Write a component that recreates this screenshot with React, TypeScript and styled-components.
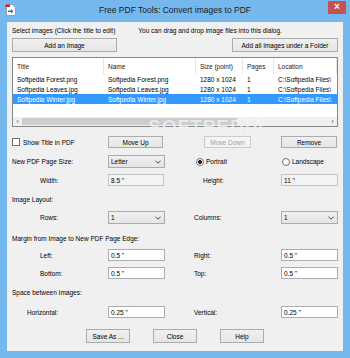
import React from "react";
import styled, { createGlobalStyle } from "styled-components";

const GlobalStyle = createGlobalStyle`
  html, body {
    margin: 0;
    padding: 0;
    background: #fff;
  }
  body {
    font-family: "Liberation Sans", Arial, sans-serif;
    font-size: 6.5px;
    color: #000;
  }
`;

const files = [
  { title: "Softpedia Forest.png", name: "Softpedia Forest.png", selected: false },
  { title: "Softpedia Leaves.jpg", name: "Softpedia Leaves.jpg", selected: false },
  { title: "Softpedia Winter.jpg", name: "Softpedia Winter.jpg", selected: true },
];

const columns = [
  { label: "Title", width: 91 },
  { label: "Name", width: 92 },
  { label: "Size (point)", width: 47 },
  { label: "Pages", width: 31 },
  { label: "Location", width: 63 },
];

function Chevron() {
  return (
    <svg width="6" height="4" viewBox="0 0 6 4">
      <path d="M0.5 0.8 L3 3.2 L5.5 0.8" fill="none" stroke="#444" strokeWidth="1" />
    </svg>
  );
}

function Combo({ value, $w }: { value: string; $w: number }) {
  return (
    <ComboBox $w={$w}>
      <span>{value}</span>
      <Chevron />
    </ComboBox>
  );
}

function AppIcon() {
  return (
    <svg width="11" height="12" viewBox="0 0 11 12">
      <path d="M1.5 0.5 H7.5 L10.5 3.5 V11.5 H1.5 Z" fill="#fff" stroke="#8aa0b8" />
      <path d="M0.5 0.5 H5 V3 H0.5 Z" fill="#e02020" />
      <path d="M3 6.5 H6 V5 L8.5 7.3 L6 9.6 V8.1 H3 Z" fill="#2f6fd6" />
    </svg>
  );
}

export default function App() {
  return (
    <>
      <GlobalStyle />
      <Window>
        <TitleBar>
          <IconSlot>
            <AppIcon />
          </IconSlot>
          <Title>Free PDF Tools: Convert images to PDF</Title>
          <CloseSlot>
            <CloseButton>×</CloseButton>
          </CloseSlot>
        </TitleBar>

        <Client>
          <Watermark>SOFTPEDIA</Watermark>

          <NoteRow>
            <span>Select images (Click the title to edit)</span>
            <span>You can drag and drop image files into this dialog.</span>
          </NoteRow>

          <TopButtons>
            <Button $w={105} $h={14}>Add an Image</Button>
            <Button $w={106} $h={14}>Add all Images under a Folder</Button>
          </TopButtons>

          <ListView>
            <HeaderRow>
              {columns.map((c) => (
                <HeaderCell key={c.label} $w={c.width}>
                  {c.label}
                </HeaderCell>
              ))}
            </HeaderRow>
            {files.map((f) => (
              <ItemRow key={f.title} $selected={f.selected}>
                <Cell $w={91}>{f.title}</Cell>
                <Cell $w={92}>{f.name}</Cell>
                <Cell $w={47}>1280 x 1024</Cell>
                <Cell $w={31}>1</Cell>
                <Cell $w={63}>C:\Softpedia Files\</Cell>
              </ItemRow>
            ))}
            <ListFill />
            <HScroll>
              <ScrollArrow>‹</ScrollArrow>
              <ScrollThumb />
              <ScrollTrack />
              <ScrollArrow>›</ScrollArrow>
            </HScroll>
          </ListView>

          <FormRow $mt={9} $h={12}>
            <CheckLabel>
              <CheckBox />
              Show Title in PDF
            </CheckLabel>
            <Button $w={55} $h={12}>Move Up</Button>
            <span />
            <Button $w={47} $h={12} $disabled $ml={10}>Move Down</Button>
            <Button $w={56} $h={12}>Remove</Button>
          </FormRow>

          <FormRow $mt={7} $h={13}>
            <Label>New PDF Page Size:</Label>
            <Combo value="Letter" $w={57} />
            <span />
            <RadioLabel $ml={2}>
              <Radio $checked />
              Portrait
            </RadioLabel>
            <RadioLabel $ml={1}>
              <Radio />
              Landscape
            </RadioLabel>
          </FormRow>

          <FormRow $mt={6} $h={12}>
            <Label $indent={28}>Width:</Label>
            <TextBox $w={56} $disabled>8.5 "</TextBox>
            <span />
            <Label $indent={9}>Height:</Label>
            <TextBox $w={57} $disabled>11 "</TextBox>
          </FormRow>

          <Heading $mt={8}>Image Layout:</Heading>

          <FormRow $mt={7} $h={13}>
            <Label $indent={28}>Rows:</Label>
            <Combo value="1" $w={57} />
            <span />
            <Label>Columns:</Label>
            <Combo value="1" $w={57} />
          </FormRow>

          <Heading $mt={9}>Margin from Image to New PDF Page Edge:</Heading>

          <FormRow $mt={6} $h={12}>
            <Label $indent={28}>Left:</Label>
            <TextBox $w={57}>0.5 "</TextBox>
            <span />
            <Label>Right:</Label>
            <TextBox $w={57}>0.5 "</TextBox>
          </FormRow>

          <FormRow $mt={6} $h={12}>
            <Label $indent={28}>Bottom:</Label>
            <TextBox $w={57}>0.5 "</TextBox>
            <span />
            <Label>Top:</Label>
            <TextBox $w={57}>0.5 "</TextBox>
          </FormRow>

          <Heading $mt={8}>Space between Images:</Heading>

          <FormRow $mt={9} $h={12}>
            <Label $indent={15}>Horizontal:</Label>
            <TextBox $w={57}>0.25 "</TextBox>
            <span />
            <Label>Vertical:</Label>
            <TextBox $w={57}>0.25 "</TextBox>
          </FormRow>

          <BottomButtons>
            <Button $w={44} $h={14}>Save As ...</Button>
            <Button $w={44} $h={14}>Close</Button>
            <Button $w={44} $h={14}>Help</Button>
          </BottomButtons>
        </Client>
      </Window>
    </>
  );
}

const Window = styled.div`
  width: 350px;
  height: 358px;
  background: #74b8ee;
  display: flex;
  flex-direction: column;
  box-sizing: border-box;
`;

const TitleBar = styled.div`
  height: 22px;
  display: grid;
  grid-template-columns: 1fr auto 1fr;
  align-items: start;
`;

const IconSlot = styled.div`
  padding: 4px 0 0 5px;
`;

const Title = styled.div`
  font-size: 8.5px;
  line-height: 11px;
  padding-top: 5px;
  color: #1a1a1a;
  white-space: nowrap;
`;

const CloseSlot = styled.div`
  display: flex;
  justify-content: flex-end;
  padding: 1px 4px 0 0;
`;

const CloseButton = styled.div`
  width: 18px;
  height: 13px;
  background: #c75050;
  color: #fff;
  font-size: 10px;
  line-height: 12px;
  text-align: center;
  font-weight: bold;
`;

const Client = styled.div`
  position: relative;
  flex: 1;
  margin: 0 7px 7px;
  padding: 0 5px;
  background: #f0f0f0;
  display: flex;
  flex-direction: column;
  overflow: hidden;
`;

const Watermark = styled.div`
  position: absolute;
  left: 141px;
  top: 94px;
  font-size: 19px;
  font-weight: bold;
  letter-spacing: 1px;
  color: rgba(255, 255, 255, 0.7);
  text-shadow: 0 0 1px rgba(0, 0, 0, 0.1);
  pointer-events: none;
`;

const NoteRow = styled.div`
  margin-top: 3px;
  height: 10px;
  display: flex;
  align-items: center;
  gap: 23px;
  white-space: nowrap;
`;

const TopButtons = styled.div`
  margin-top: 3px;
  display: flex;
  justify-content: space-between;
`;

const Button = styled.div<{ $w: number; $h: number; $disabled?: boolean; $ml?: number }>`
  width: ${(p) => p.$w}px;
  height: ${(p) => p.$h}px;
  margin-left: ${(p) => p.$ml ?? 0}px;
  box-sizing: border-box;
  border: 1px solid ${(p) => (p.$disabled ? "#cbcbcb" : "#acacac")};
  background: ${(p) =>
    p.$disabled ? "#f4f4f4" : "linear-gradient(#f0f0f0, #e5e5e5)"};
  color: ${(p) => (p.$disabled ? "#a0a0a0" : "#000")};
  display: flex;
  align-items: center;
  justify-content: center;
  white-space: nowrap;
`;

const ListView = styled.div`
  margin-top: 5px;
  height: 70px;
  box-sizing: border-box;
  border: 1px solid #828790;
  background: #fff;
  display: flex;
  flex-direction: column;
  overflow: hidden;
`;

const HeaderRow = styled.div`
  height: 16px;
  display: flex;
  flex-shrink: 0;
`;

const HeaderCell = styled.div<{ $w: number }>`
  width: ${(p) => p.$w}px;
  flex-shrink: 0;
  box-sizing: border-box;
  padding-left: 4px;
  border-right: 1px solid #e5e5e5;
  display: flex;
  align-items: center;
  color: #222;
  white-space: nowrap;
`;

const ItemRow = styled.div<{ $selected?: boolean }>`
  height: 10px;
  display: flex;
  flex-shrink: 0;
  background: ${(p) => (p.$selected ? "#3399ff" : "transparent")};
  color: ${(p) => (p.$selected ? "#fff" : "#000")};
`;

const Cell = styled.div<{ $w: number }>`
  width: ${(p) => p.$w}px;
  flex-shrink: 0;
  box-sizing: border-box;
  padding-left: 4px;
  display: flex;
  align-items: center;
  white-space: nowrap;
  overflow: hidden;
`;

const ListFill = styled.div`
  flex: 1;
`;

const HScroll = styled.div`
  height: 9px;
  display: flex;
  align-items: stretch;
  background: #f0f0f0;
`;

const ScrollArrow = styled.div`
  width: 9px;
  display: flex;
  align-items: center;
  justify-content: center;
  font-size: 8px;
  color: #606060;
`;

const ScrollThumb = styled.div`
  width: 215px;
  background: #cdcdcd;
  margin: 1px 0;
`;

const ScrollTrack = styled.div`
  flex: 1;
`;

const FormRow = styled.div<{ $mt: number; $h: number }>`
  margin-top: ${(p) => p.$mt}px;
  height: ${(p) => p.$h}px;
  display: grid;
  grid-template-columns: 96px 57px 29px 87px 57px;
  align-items: center;
  white-space: nowrap;
`;

const Heading = styled.div<{ $mt: number }>`
  margin-top: ${(p) => p.$mt}px;
  height: 10px;
  display: flex;
  align-items: center;
  white-space: nowrap;
`;

const Label = styled.div<{ $indent?: number }>`
  padding-left: ${(p) => p.$indent ?? 0}px;
`;

const CheckLabel = styled.label`
  display: flex;
  align-items: center;
  gap: 3px;
`;

const CheckBox = styled.span`
  width: 8px;
  height: 8px;
  box-sizing: border-box;
  border: 1px solid #707070;
  background: #fff;
`;

const RadioLabel = styled.label<{ $ml?: number }>`
  display: flex;
  align-items: center;
  gap: 2px;
  margin-left: ${(p) => p.$ml ?? 0}px;
`;

const Radio = styled.span<{ $checked?: boolean }>`
  width: 8px;
  height: 8px;
  box-sizing: border-box;
  border-radius: 50%;
  border: 1px solid #707070;
  background: ${(p) =>
    p.$checked ? "radial-gradient(circle, #222 0 1.8px, #fff 2.2px)" : "#fff"};
`;

const ComboBox = styled.div<{ $w: number }>`
  width: ${(p) => p.$w}px;
  height: 13px;
  box-sizing: border-box;
  border: 1px solid #acacac;
  background: linear-gradient(#f0f0f0, #e5e5e5);
  display: flex;
  align-items: center;
  justify-content: space-between;
  padding: 0 3px 0 2px;
`;

const TextBox = styled.div<{ $w: number; $disabled?: boolean }>`
  width: ${(p) => p.$w}px;
  height: 12px;
  box-sizing: border-box;
  border: 1px solid ${(p) => (p.$disabled ? "#c4c4c4" : "#abadb3")};
  background: ${(p) => (p.$disabled ? "#f3f3f3" : "#fff")};
  display: flex;
  align-items: center;
  padding-left: 2px;
`;

const BottomButtons = styled.div`
  margin-top: 11px;
  display: flex;
  justify-content: center;
  gap: 23px;
`;
